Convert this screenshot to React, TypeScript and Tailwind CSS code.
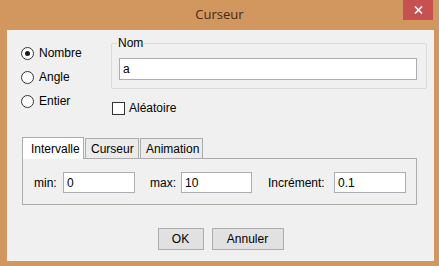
import React from 'react';

function Radio({ label, checked }: { label: string; checked?: boolean }) {
  return (
    <div className="flex h-[24px] items-center">
      <span className="flex h-[13px] w-[13px] items-center justify-center rounded-full border border-[#333333] bg-white">
        {checked && <span className="h-[5px] w-[5px] rounded-full bg-[#1a1a1a]" />}
      </span>
      <span className="ml-[5px]">{label}</span>
    </div>
  );
}

function Field({ value, className }: { value: string; className: string }) {
  return (
    <input
      readOnly
      value={value}
      className={`h-[21px] border border-[#abadb3] bg-white px-[3px] text-[12px] text-black outline-none ${className}`}
    />
  );
}

export default function App() {
  return (
    <div className="flex h-[266px] w-[439px] flex-col bg-[#d2975e] font-['Liberation_Sans',Arial,sans-serif] text-[12px] text-black">
      {/* title bar */}
      <div className="relative flex h-[30px] items-center justify-center">
        <span className="font-['Open_Sans',sans-serif] text-[13px] text-[#3f2a18]">Curseur</span>
        <div className="absolute right-[6px] top-0 flex h-[20px] w-[30px] items-center justify-center bg-[#c75050]">
          <svg width="9" height="8" viewBox="0 0 9 8">
            <path d="M1 0.5 L8 7.5 M8 0.5 L1 7.5" stroke="#ffffff" strokeWidth="1.6" />
          </svg>
        </div>
      </div>

      {/* client area */}
      <div className="ml-[7px] mr-[5px] flex h-[231px] flex-col bg-[#f0f0f0]">
        <div className="flex h-[107px]">
          <div className="w-[104px] pl-[14px] pt-[11px]">
            <Radio label="Nombre" checked />
            <Radio label="Angle" />
            <Radio label="Entier" />
          </div>
          <div className="pt-[13px]">
            <div className="relative h-[46px] w-[316px] rounded-[2px] border border-[#dadada] pl-[7px] pt-[14px]">
              <span className="absolute -top-[8px] left-[5px] bg-[#f0f0f0] px-[1px] leading-[14px]">Nom</span>
              <Field value="a" className="h-[22px] w-[298px]" />
            </div>
            <div className="ml-[1px] mt-[11px] flex h-[16px] items-center">
              <span className="h-[13px] w-[13px] border border-[#333333] bg-white" />
              <span className="ml-[4px]">Aléatoire</span>
            </div>
          </div>
        </div>

        {/* tabs */}
        <div className="ml-[15px] w-[395px]">
          <div className="flex h-[21px] items-end">
            <div className="relative z-10 -mb-px flex h-[22px] w-[62px] items-center border border-b-0 border-[#acacac] bg-white pl-[8px]">
              Intervalle
            </div>
            <div className="ml-[1px] flex h-[20px] w-[54px] items-center border border-b-0 border-[#acacac] bg-[#ebebeb] pl-[5px]">
              Curseur
            </div>
            <div className="ml-[1px] flex h-[20px] w-[63px] items-center border border-b-0 border-[#acacac] bg-[#ebebeb] pl-[5px]">
              Animation
            </div>
          </div>
          <div className="flex h-[47px] items-start border border-[#acacac] bg-[#f0f0f0] pl-[11px] pt-[13px]">
            <span className="flex h-[21px] w-[29px] items-center">min:</span>
            <Field value="0" className="w-[72px]" />
            <span className="ml-[15px] flex h-[21px] w-[31px] items-center">max:</span>
            <Field value="10" className="w-[71px]" />
            <span className="ml-[16px] flex h-[21px] w-[66px] items-center">Incrément:</span>
            <Field value="0.1" className="w-[72px]" />
          </div>
        </div>

        {/* buttons */}
        <div className="mt-[23px] flex justify-center gap-[8px]">
          <button className="h-[22px] w-[46px] border border-[#adadad] bg-[#e1e1e1] text-[12px]">OK</button>
          <button className="h-[22px] w-[72px] border border-[#adadad] bg-[#e1e1e1] text-[12px]">Annuler</button>
        </div>
      </div>
    </div>
  );
}
